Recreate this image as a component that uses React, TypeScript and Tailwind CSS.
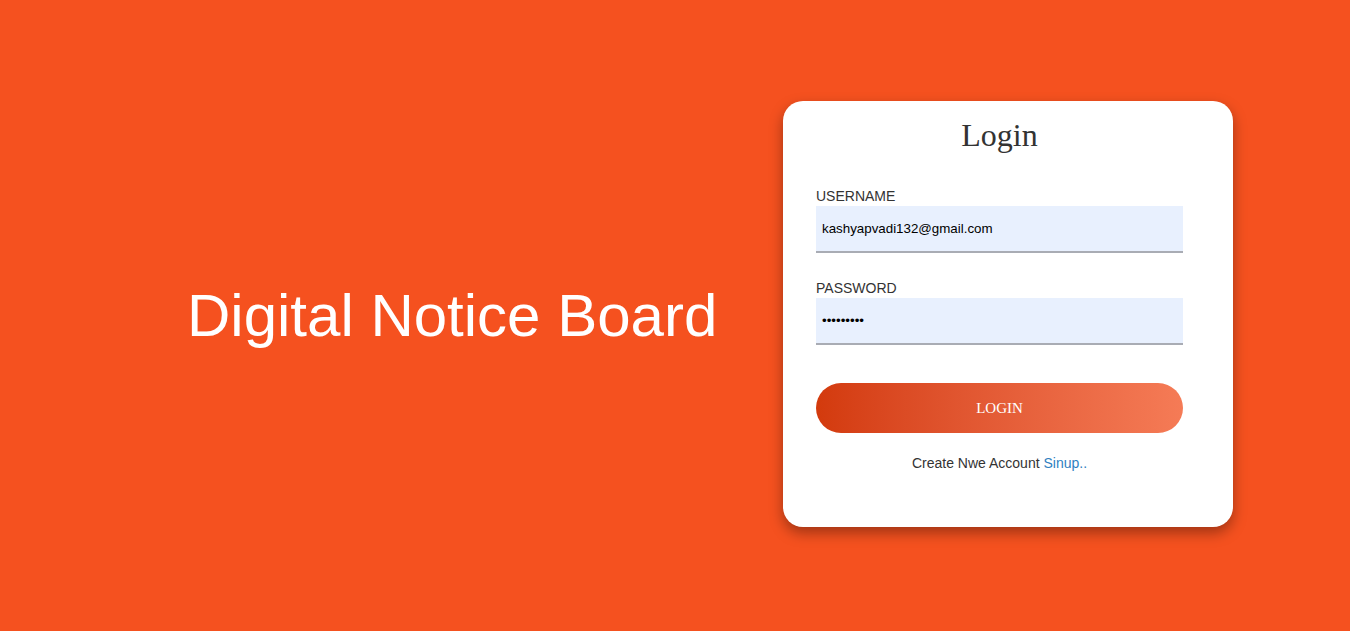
export default function App() {
  return (
    <div className="flex h-[631px] w-full items-center bg-[#f5511f] font-['Liberation_Sans',Arial,sans-serif]">
      <div className="ml-[187px] w-[527px] text-[60px] leading-none whitespace-nowrap text-white">
        Digital Notice Board
      </div>

      <div className="mb-[3px] ml-[69px] h-[426px] w-[450px] rounded-[20px] bg-white pt-[14px] pl-[33px] shadow-[0_6px_14px_rgba(0,0,0,0.35)]">
        <div className="w-[367px]">
          <h2 className="text-center font-['Liberation_Serif','Times_New_Roman',serif] text-[32px] leading-[40px] text-[#333]">
            Login
          </h2>

          <form className="mt-[33px]" onSubmit={(e) => e.preventDefault()}>
            <label className="block text-[14px] leading-[16px] text-[#333]">USERNAME</label>
            <input
              defaultValue="kashyapvadi132@gmail.com"
              className="mt-[2px] block h-[47px] w-full border-b-2 border-[#a9acb4] bg-[#e8f0fe] px-[6px] text-[13.33px] text-black outline-none"
            />

            <label className="mt-[27px] block text-[14px] leading-[16px] text-[#333]">PASSWORD</label>
            <input
              type="password"
              defaultValue="kashyapva"
              className="mt-[2px] block h-[47px] w-full border-b-2 border-[#a9acb4] bg-[#e8f0fe] px-[6px] text-[13.33px] text-black outline-none"
            />

            <button
              type="submit"
              className="mt-[38px] block h-[50px] w-full rounded-full bg-gradient-to-r from-[#d33a0c] to-[#f57b56] font-['Liberation_Serif','Times_New_Roman',serif] text-[15px] text-white"
            >
              LOGIN
            </button>
          </form>

          <p className="mt-[22px] text-center text-[14px] leading-[16px] text-[#333]">
            Create Nwe Account <a href="#" className="text-[#2f7fc1]">Sinup..</a>
          </p>
        </div>
      </div>
    </div>
  );
}
